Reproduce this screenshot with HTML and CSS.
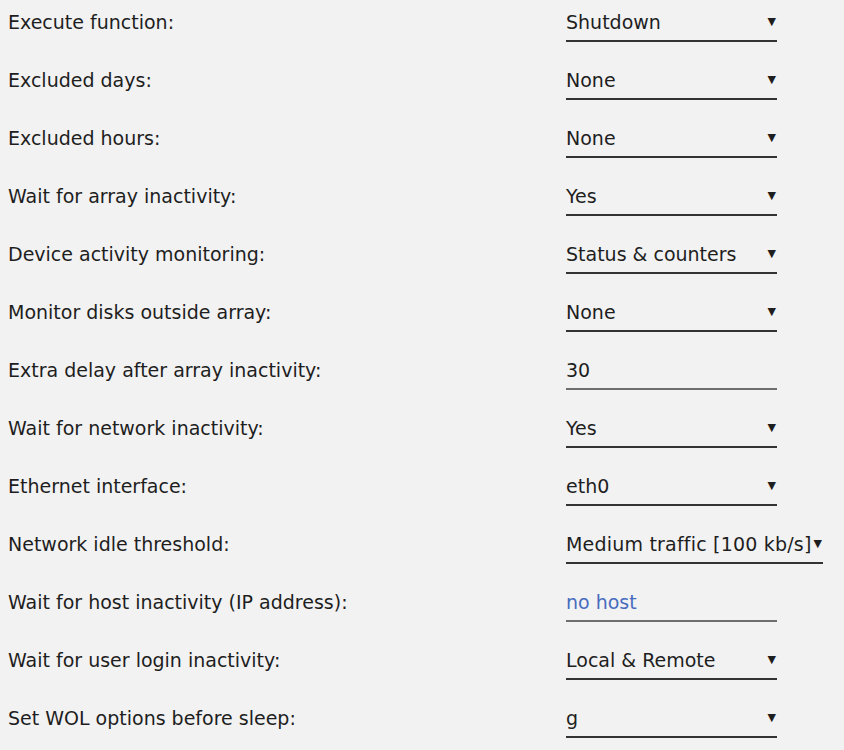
FILE: index.html
```html
<!DOCTYPE html>
<html>
<head>
<meta charset="utf-8">
<link rel="stylesheet" href="styles.css">
</head>
<body>
<form class="settings">
  <div class="row"><span class="label">Execute function:</span><div class="select"><span>Shutdown</span><span class="arrow">▼</span></div></div>
  <div class="row"><span class="label">Excluded days:</span><div class="select"><span>None</span><span class="arrow">▼</span></div></div>
  <div class="row"><span class="label">Excluded hours:</span><div class="select"><span>None</span><span class="arrow">▼</span></div></div>
  <div class="row"><span class="label">Wait for array inactivity:</span><div class="select"><span>Yes</span><span class="arrow">▼</span></div></div>
  <div class="row"><span class="label">Device activity monitoring:</span><div class="select"><span>Status &amp; counters</span><span class="arrow">▼</span></div></div>
  <div class="row"><span class="label">Monitor disks outside array:</span><div class="select"><span>None</span><span class="arrow">▼</span></div></div>
  <div class="row"><span class="label">Extra delay after array inactivity:</span><div class="input"><span>30</span></div></div>
  <div class="row"><span class="label">Wait for network inactivity:</span><div class="select"><span>Yes</span><span class="arrow">▼</span></div></div>
  <div class="row"><span class="label">Ethernet interface:</span><div class="select"><span>eth0</span><span class="arrow">▼</span></div></div>
  <div class="row"><span class="label">Network idle threshold:</span><div class="select wide"><span>Medium traffic [100 kb/s]</span><span class="arrow">▼</span></div></div>
  <div class="row"><span class="label">Wait for host inactivity (IP address):</span><div class="input"><span class="link">no host</span></div></div>
  <div class="row"><span class="label">Wait for user login inactivity:</span><div class="select"><span>Local &amp; Remote</span><span class="arrow">▼</span></div></div>
  <div class="row"><span class="label">Set WOL options before sleep:</span><div class="select"><span>g</span><span class="arrow">▼</span></div></div>
</form>
</body>
</html>
```
FILE: styles.css
```css
html, body {
  margin: 0;
  padding: 0;
  background: #f2f2f2;
}
body {
  font-family: "DejaVu Sans", sans-serif;
  font-size: 19px;
  color: #1e1e1e;
}
.settings {
  display: flex;
  flex-direction: column;
  gap: 18px;
  padding: 2px 0 0 8px;
}
.row {
  display: grid;
  grid-template-columns: 558px auto;
  align-items: center;
}
.select, .input {
  display: flex;
  align-items: center;
  justify-content: space-between;
  width: 211px;
  height: 40px;
  padding-top: 1px;
  box-sizing: border-box;
  border-bottom: 2px solid #333;
  justify-self: start;
}
.input {
  border-bottom-color: #6e6e6e;
}
.select.wide {
  width: auto;
  gap: 2px;
  letter-spacing: 0.2px;
}
.arrow {
  font-size: 11px;
  padding-right: 1px;
}
.link {
  color: #486cc0;
}
```
